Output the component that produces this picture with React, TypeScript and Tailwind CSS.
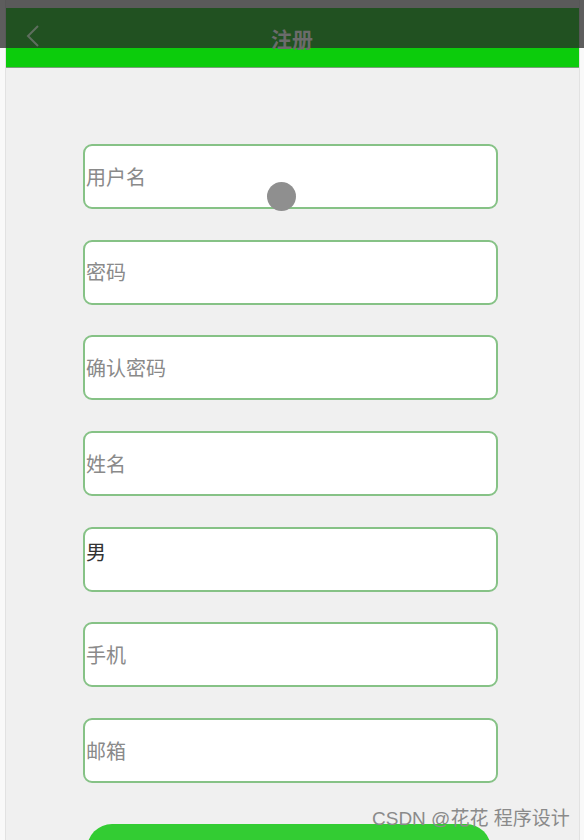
import React from "react";

const fields = ["用户名", "密码", "确认密码", "姓名"];
const fields2 = ["手机", "邮箱"];

function Field({ label }: { label: string }) {
  return (
    <div className="h-[65px] w-[415px] rounded-[9px] border-2 border-[#86c286] bg-white flex items-center pl-[1px]">
      <span className="text-[20px] leading-none text-[#8a8a8a]">{label}</span>
    </div>
  );
}

export default function App() {
  return (
    <div
      className="relative w-[584px] h-[840px] overflow-hidden bg-[#f9f9f9]"
      style={{ fontFamily: '"Noto Sans CJK SC", "Liberation Sans", sans-serif' }}
    >
      <div className="ml-[5px] mr-[4px] h-[840px] border-l border-r border-[#e2e2e2] bg-[#f0f0f0] pt-[8px]">
        <div className="h-[60px] w-[573px] bg-[#0ccc0c] border-b border-[#7aa07a]" />
        <div className="flex flex-col items-start pl-[77px] pt-[76px] gap-[30.7px]">
          {fields.map((f) => (
            <Field key={f} label={f} />
          ))}
          <div className="h-[65px] w-[415px] rounded-[9px] border-2 border-[#86c286] bg-white flex items-start pt-[13px] pl-[1px]">
            <span className="text-[20px] leading-none text-[#333]">男</span>
          </div>
          {fields2.map((f) => (
            <Field key={f} label={f} />
          ))}
          <div className="mt-[10px] ml-[4px] h-[50px] w-[404px] rounded-[25px] bg-[#33cc33]" />
        </div>
      </div>

      {/* dark overlay bar */}
      <div className="absolute left-0 top-0 w-[584px] h-[48px] bg-[rgba(40,40,40,0.75)] flex items-center justify-center">
        <svg
          className="absolute left-[24px] top-[24px]"
          width="18"
          height="24"
          viewBox="0 0 18 24"
          fill="none"
        >
          <path d="M14 2 L4 12 L14 22" stroke="#5e6e5e" strokeWidth="2" />
        </svg>
        <span className="mt-[28px] text-[21px] font-bold leading-none text-[#6b6b6b]">注册</span>
      </div>

      {/* touch indicator */}
      <div className="absolute left-[267px] top-[182px] h-[29px] w-[29px] rounded-full bg-[#8f8f8f] blur-[0.6px]" />

      {/* watermark */}
      <div
        className="absolute left-[372px] top-[809px] text-[19px] leading-none text-[#8a8a8a] whitespace-nowrap"
        style={{ fontFamily: '"Liberation Sans", "Noto Sans CJK SC", sans-serif' }}
      >
        CSDN @花花 程序设计
      </div>
    </div>
  );
}
